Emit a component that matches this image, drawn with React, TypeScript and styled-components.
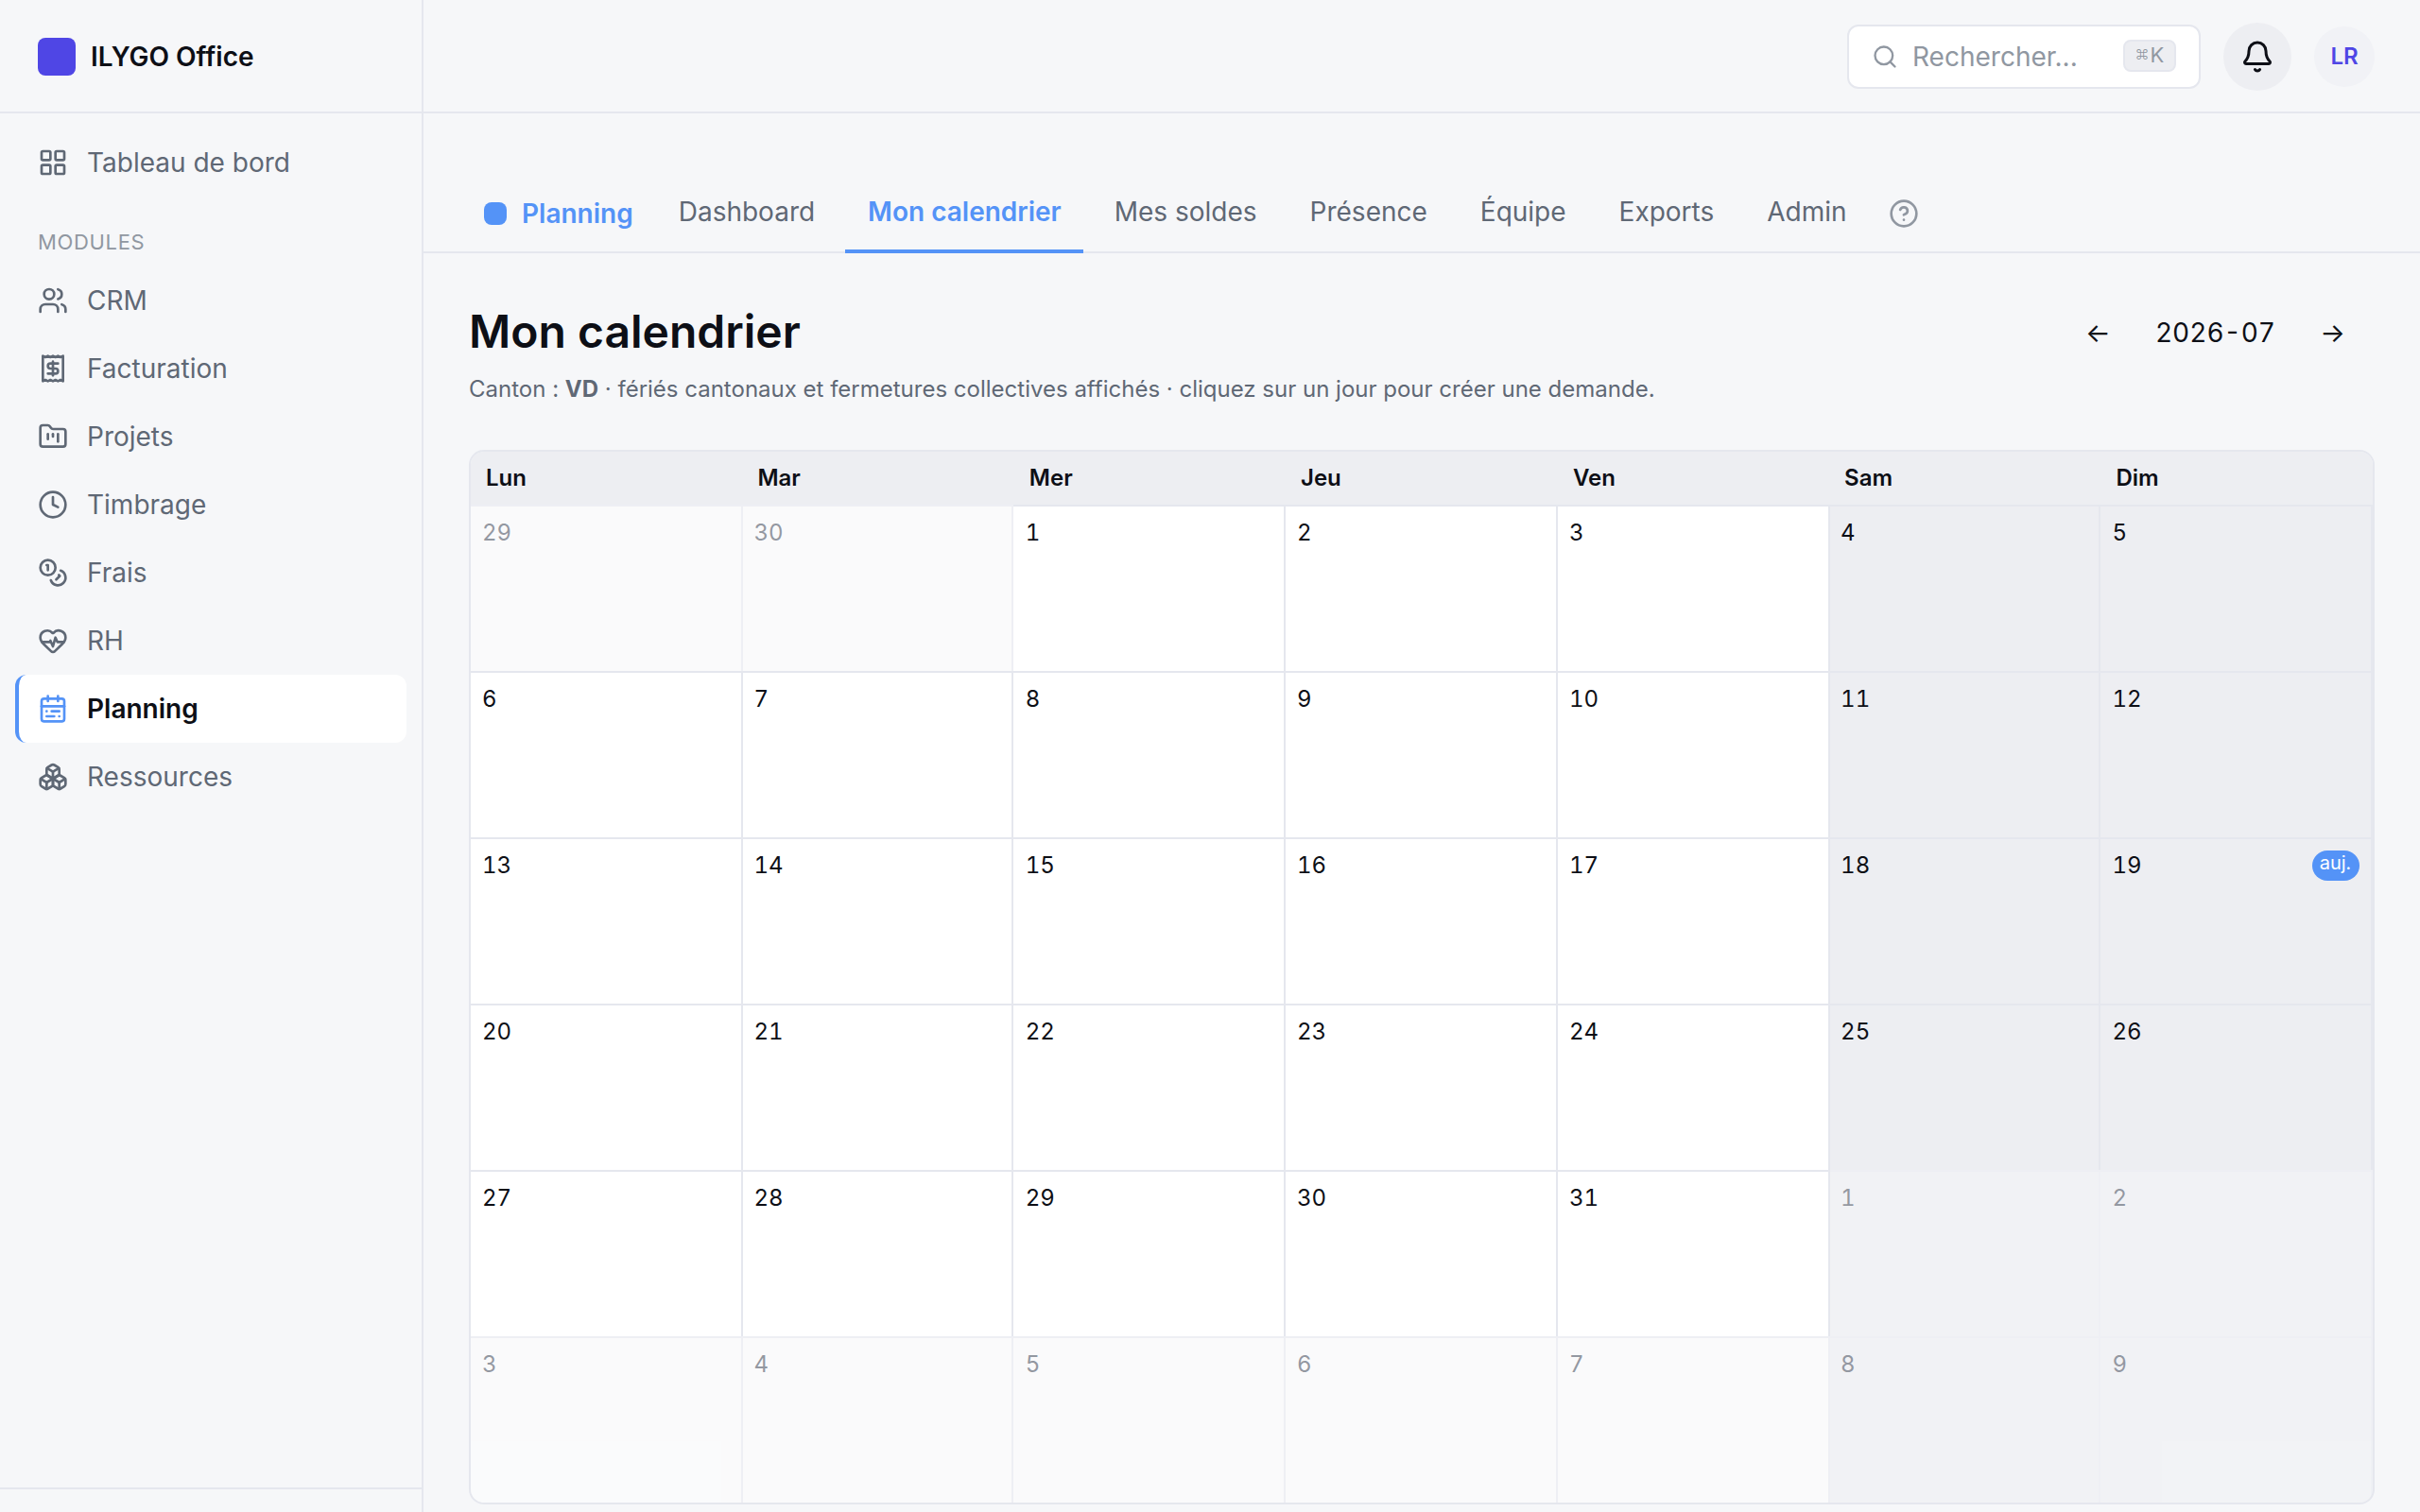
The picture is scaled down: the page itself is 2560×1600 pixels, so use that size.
import React from "react";
import styled, { createGlobalStyle, css } from "styled-components";
import {
  Bell,
  Boxes,
  CalendarRange,
  CircleQuestionMark,
  Clock,
  Coins,
  FolderKanban,
  HeartPulse,
  LayoutGrid,
  Receipt,
  Search,
  Users,
} from "lucide-react";

const color = {
  page: "#f6f7f9",
  surface: "#ffffff",
  sunken: "#edeef2",
  soft: "#f1f2f6",
  border: "#e5e7ee",
  text: "#0d0f16",
  textMuted: "#5f6875",
  textFaint: "#9097a1",
  brand: "#4f46e5",
  accent: "#5493f7",
};

const GlobalStyle = createGlobalStyle`
  *, *::before, *::after { box-sizing: border-box; }
  html, body, #root { height: 100%; }
  body {
    margin: 0;
    overflow: hidden;
    background: ${color.page};
    color: ${color.text};
    font-family: Inter, "Liberation Sans", sans-serif;
    font-size: 28px;
    line-height: 40px;
  }
`;

const Shell = styled.div`
  display: grid;
  grid-template-columns: 448px 1fr;
  grid-template-rows: 1600px;
  height: 1600px;
`;

const Sidebar = styled.aside`
  display: flex;
  flex-direction: column;
  border-right: 2px solid ${color.border};
`;

const Brand = styled.div`
  display: flex;
  align-items: center;
  gap: 16px;
  height: 120px;
  padding: 2px 40px 0;
  border-bottom: 2px solid ${color.border};
  font-weight: 600;
`;

const Logo = styled.span`
  width: 40px;
  height: 40px;
  border-radius: 8px;
  background: ${color.brand};
`;

const Nav = styled.nav`
  flex: 1;
  padding: 16px 16px 0;
`;

const NavHeading = styled.div`
  height: 74px;
  padding: 32px 24px 0;
  color: ${color.textFaint};
  font-size: 22px;
  line-height: 32px;
  letter-spacing: 0.03em;
`;

const NavItem = styled.a<{ $active?: boolean }>`
  display: flex;
  align-items: center;
  gap: 20px;
  height: 72px;
  padding-left: 20px;
  border-left: 4px solid transparent;
  border-radius: 12px;
  color: ${color.textMuted};

  ${(p) =>
    p.$active &&
    css`
      border-left-color: ${color.accent};
      background: ${color.surface};
      color: ${color.text};
      font-weight: 600;

      svg {
        color: ${color.accent};
      }
    `}
`;

const SidebarFooter = styled.div`
  height: 26px;
  border-top: 2px solid ${color.border};
`;

const Content = styled.div`
  display: flex;
  flex-direction: column;
  min-width: 0;
`;

const TopBar = styled.header`
  flex: none;
  display: flex;
  align-items: center;
  justify-content: flex-end;
  gap: 24px;
  height: 120px;
  padding: 2px 48px 0 0;
  border-bottom: 2px solid ${color.border};
`;

const SearchBox = styled.div`
  display: flex;
  align-items: center;
  gap: 16px;
  width: 374px;
  height: 68px;
  padding: 0 24px;
  border: 2px solid ${color.border};
  border-radius: 12px;
  background: ${color.surface};
  color: ${color.textFaint};
`;

const SearchText = styled.span`
  flex: 1;
  margin-left: -1px;
`;

const Kbd = styled.kbd`
  display: flex;
  align-items: center;
  justify-content: center;
  gap: 1px;
  width: 56px;
  height: 34px;
  margin-top: -2px;
  padding-bottom: 2px;
  border: 2px solid ${color.border};
  border-radius: 8px;
  background: ${color.sunken};
  font-family: inherit;
  font-size: 22px;
  line-height: 28px;
`;

const CommandKey = styled.span`
  font-size: 15px;
  font-weight: 300;
`;

const BellButton = styled.button`
  display: grid;
  place-items: center;
  width: 72px;
  height: 72px;
  padding: 0;
  border: 0;
  border-radius: 50%;
  background: ${color.sunken};
  color: ${color.text};
`;

const Avatar = styled.span`
  display: grid;
  place-items: center;
  width: 64px;
  height: 64px;
  border-radius: 50%;
  background: ${color.soft};
  color: ${color.brand};
  font-size: 24px;
  font-weight: 600;
`;

const Tabs = styled.nav`
  flex: none;
  display: flex;
  align-items: center;
  gap: 8px;
  height: 148px;
  padding: 64px 48px 0;
  border-bottom: 2px solid ${color.border};
`;

const TabsBrand = styled.span`
  display: flex;
  align-items: center;
  gap: 16px;
  padding: 2px 16px 0;
  color: ${color.accent};
  font-weight: 600;
`;

const Dot = styled.span`
  width: 24px;
  height: 24px;
  border-radius: 8px;
  background: ${color.accent};
`;

const Tab = styled.a<{ $active?: boolean }>`
  height: 84px;
  margin: 0 0.6px -2px 0;
  padding: 20px 23.4px 20px 24px;
  border-bottom: 4px solid ${(p) => (p.$active ? color.accent : "transparent")};
  color: ${(p) => (p.$active ? color.accent : color.textMuted)};
  font-weight: ${(p) => (p.$active ? 600 : 400)};
`;

const Help = styled.span`
  display: flex;
  padding: 2px 0 0 12px;
  color: ${color.textFaint};
`;

const Main = styled.main`
  padding: 48px;
`;

const PageHead = styled.div`
  display: flex;
  align-items: flex-start;
  justify-content: space-between;
  height: 160px;
`;

const Title = styled.h1`
  margin: 0;
  padding-top: 1px;
  font-size: 48px;
  font-weight: 600;
  line-height: 68px;
`;

const Subtitle = styled.p`
  margin: 9px 0 0;
  color: ${color.textMuted};
  font-size: 24px;
  line-height: 36px;
`;

const MonthNav = styled.div`
  display: flex;
  align-items: center;
  gap: 16px;
  height: 72px;
  font-variant-numeric: tabular-nums;
`;

const ArrowButton = styled.button`
  width: 89px;
  height: 64px;
  padding: 0;
  border: 0;
  background: none;
  color: inherit;
  font: inherit;
`;

const Month = styled.span`
  min-width: 125px;
  text-align: center;
`;

const Calendar = styled.div`
  overflow: hidden;
  border: 2px solid ${color.border};
  border-radius: 16px;
  font-size: 24px;
`;

const columns = css`
  display: grid;
  grid-template-columns: 288px 286px 288px 288px 288px 286px 288px;
`;

const WeekHead = styled.div`
  ${columns}
  height: 56px;
  background: ${color.sunken};
  font-weight: 600;
  line-height: 56px;
`;

// Columns sit on whole pixels; the labels keep the spacing of an even seventh.
const evenInset = (base: number) => css`
  padding-left: ${base}px;
  &:nth-child(2) { padding-left: ${base - 0.6}px; }
  &:nth-child(3) { padding-left: ${base + 0.8}px; }
  &:nth-child(6) { padding-left: ${base - 0.9}px; }
  &:nth-child(7) { padding-left: ${base + 0.5}px; }
`;

const WeekDay = styled.div`
  ${evenInset(16)}
`;

const Week = styled.div`
  ${columns}
`;

const Day = styled.div<{ $weekend: boolean; $outside: boolean }>`
  display: flex;
  align-items: flex-start;
  justify-content: space-between;
  height: 176px;
  padding: 12px;
  ${evenInset(12)}
  border-top: 2px solid ${color.border};
  border-right: 2px solid ${color.border};
  background: ${(p) => (p.$weekend ? color.sunken : color.surface)};
  color: ${(p) => (p.$outside ? "#1c2638" : color.text)};
  line-height: 32px;
  font-variant-numeric: tabular-nums;
  opacity: ${(p) => (p.$outside ? 0.45 : 1)};
`;

const Today = styled.span`
  height: 32px;
  padding: 0 9px 0 8px;
  border-radius: 16px;
  background: ${color.accent};
  color: #ffffff;
  font-size: 20px;
  line-height: 26px;
`;

const modules = [
  { label: "CRM", icon: Users },
  { label: "Facturation", icon: Receipt },
  { label: "Projets", icon: FolderKanban },
  { label: "Timbrage", icon: Clock },
  { label: "Frais", icon: Coins },
  { label: "RH", icon: HeartPulse },
  { label: "Planning", icon: CalendarRange, active: true },
  { label: "Ressources", icon: Boxes },
];

const tabs = ["Dashboard", "Mon calendrier", "Mes soldes", "Présence", "Équipe", "Exports", "Admin"];
const weekDays = ["Lun", "Mar", "Mer", "Jeu", "Ven", "Sam", "Dim"];

// July 2026 starts on a Wednesday: the grid opens on June 29.
const weeks = Array.from({ length: 6 }, (_, w) =>
  Array.from({ length: 7 }, (_, d) => {
    const date = new Date(2026, 5, 29 + w * 7 + d);
    return {
      day: date.getDate(),
      weekend: d > 4,
      outside: date.getMonth() !== 6,
      today: date.getMonth() === 6 && date.getDate() === 19,
    };
  })
);

export default function App() {
  return (
    <>
      <GlobalStyle />
      <Shell>
        <Sidebar>
          <Brand>
            <Logo />
            ILYGO Office
          </Brand>
          <Nav>
            <NavItem>
              <LayoutGrid size={32} />
              Tableau de bord
            </NavItem>
            <NavHeading>MODULES</NavHeading>
            {modules.map(({ label, icon: Icon, active }) => (
              <NavItem key={label} $active={active}>
                <Icon size={32} />
                {label}
              </NavItem>
            ))}
          </Nav>
          <SidebarFooter />
        </Sidebar>
        <Content>
          <TopBar>
            <SearchBox>
              <Search size={28} />
              <SearchText>Rechercher...</SearchText>
              <Kbd>
                <CommandKey>⌘</CommandKey>K
              </Kbd>
            </SearchBox>
            <BellButton>
              <Bell size={36} />
            </BellButton>
            <Avatar>LR</Avatar>
          </TopBar>
          <Tabs>
            <TabsBrand>
              <Dot />
              Planning
            </TabsBrand>
            {tabs.map((label) => (
              <Tab key={label} $active={label === "Mon calendrier"}>
                {label}
              </Tab>
            ))}
            <Help>
              <CircleQuestionMark size={32} />
            </Help>
          </Tabs>
          <Main>
            <PageHead>
              <div>
                <Title>Mon calendrier</Title>
                <Subtitle>
                  Canton : <strong>VD</strong> · fériés cantonaux et fermetures collectives affichés · cliquez sur un
                  jour pour créer une demande.
                </Subtitle>
              </div>
              <MonthNav>
                <ArrowButton>←</ArrowButton>
                <Month>2026-07</Month>
                <ArrowButton>→</ArrowButton>
              </MonthNav>
            </PageHead>
            <Calendar>
              <WeekHead>
                {weekDays.map((name) => (
                  <WeekDay key={name}>{name}</WeekDay>
                ))}
              </WeekHead>
              {weeks.map((days, w) => (
                <Week key={w}>
                  {days.map((d) => (
                    <Day key={d.day} $weekend={d.weekend} $outside={d.outside}>
                      {d.day}
                      {d.today && <Today>auj.</Today>}
                    </Day>
                  ))}
                </Week>
              ))}
            </Calendar>
          </Main>
        </Content>
      </Shell>
    </>
  );
}
